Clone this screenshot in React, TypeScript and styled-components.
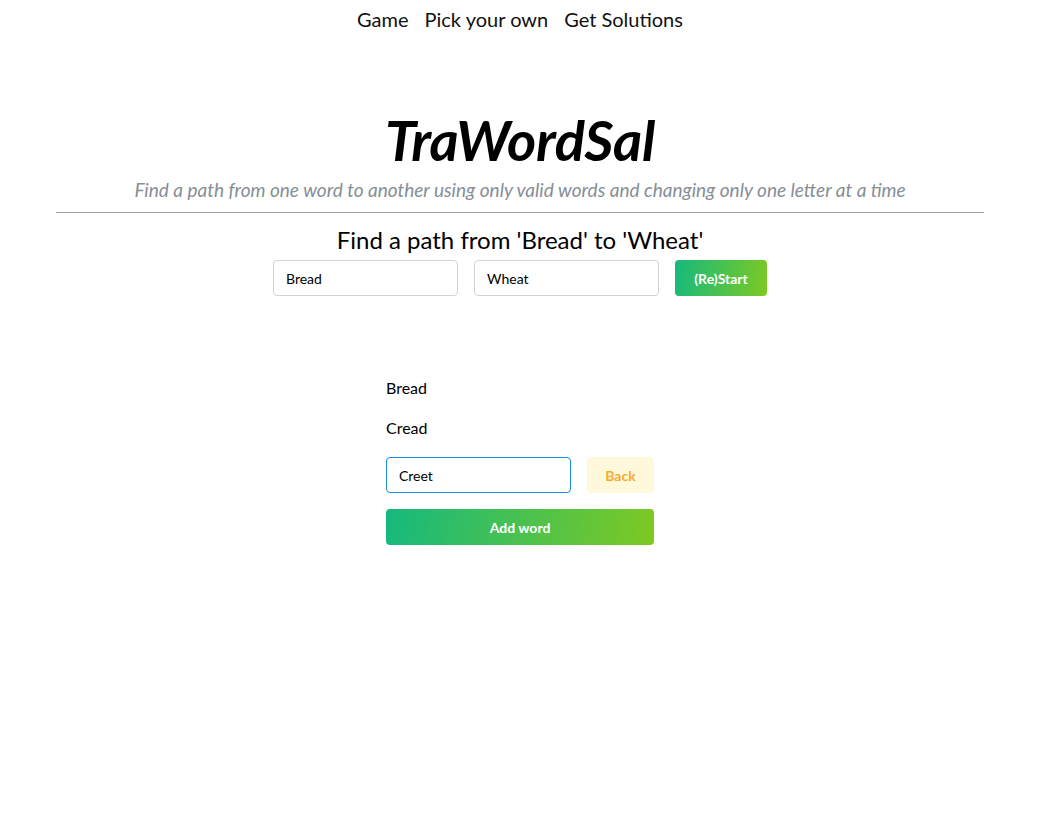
import styled, { createGlobalStyle } from "styled-components";

const GlobalStyle = createGlobalStyle`
  body {
    margin: 7px 13px 8px 8px;
    font-family: Lato, "Noto Sans", sans-serif;
    color: #000;
    background: #fff;
  }
`;

const Nav = styled.nav`
  display: flex;
  justify-content: center;
  gap: 16px;
  font-size: 20px;
  line-height: 24px;
`;

const NavLink = styled.a`
  color: #111;
  text-decoration: none;
  cursor: pointer;
`;

const Header = styled.header`
  margin: 77px 48px 0;
  text-align: center;
  border-bottom: 1px solid #a0a0a0;
  padding-bottom: 10px;
`;

const Title = styled.h1`
  margin: 0;
  font-size: 56px;
  line-height: 64px;
  font-weight: 700;
  font-style: italic;
  letter-spacing: -0.3px;
`;

const Subtitle = styled.p`
  margin: 6px 0 0;
  font-size: 19px;
  line-height: 24px;
  font-style: italic;
  color: #868e96;
`;

const Heading = styled.h2`
  margin: 12px 0 0;
  text-align: center;
  font-size: 24px;
  line-height: 30px;
  font-weight: 400;
`;

const Row = styled.div`
  display: flex;
  justify-content: center;
  gap: 16px;
  margin-top: 5px;
`;

const TextInput = styled.input<{ $focused?: boolean }>`
  box-sizing: border-box;
  width: 185px;
  height: 36px;
  padding: 0 12px;
  font-family: inherit;
  font-size: 14px;
  border: 1px solid ${(p) => (p.$focused ? "#1e88e5" : "#d0d3d8")};
  border-radius: 4px;
  outline: none;
  color: #000;
`;

const GradientButton = styled.button<{ $width: number }>`
  box-sizing: border-box;
  width: ${(p) => p.$width}px;
  height: 36px;
  border: none;
  border-radius: 4px;
  background: linear-gradient(100deg, #15b97e 0%, #7ec922 100%);
  color: #fff;
  font-family: inherit;
  font-weight: 700;
  font-size: 14px;
  cursor: pointer;
`;

const BackButton = styled.button`
  box-sizing: border-box;
  width: 67px;
  height: 36px;
  border: none;
  border-radius: 4px;
  background: #fff8db;
  color: #f5ac32;
  font-family: inherit;
  font-weight: 700;
  font-size: 14px;
  cursor: pointer;
`;

const Game = styled.section`
  width: 268px;
  margin: 80px auto 0;
  display: flex;
  flex-direction: column;
`;

const Word = styled.div`
  font-size: 16px;
  line-height: 24px;
  margin-bottom: 16px;
`;

const InputRow = styled.div`
  display: flex;
  justify-content: space-between;
  margin-top: 1px;
`;

const AddRow = styled.div`
  margin-top: 16px;
`;

export default function App() {
  return (
    <>
      <GlobalStyle />
      <Nav>
        <NavLink>Game</NavLink>
        <NavLink>Pick your own</NavLink>
        <NavLink>Get Solutions</NavLink>
      </Nav>
      <Header>
        <Title>TraWordSal</Title>
        <Subtitle>
          Find a path from one word to another using only valid words and changing only one letter at a time
        </Subtitle>
      </Header>
      <Heading>Find a path from 'Bread' to 'Wheat'</Heading>
      <Row>
        <TextInput defaultValue="Bread" />
        <TextInput defaultValue="Wheat" />
        <GradientButton $width={92}>(Re)Start</GradientButton>
      </Row>
      <Game>
        <Word>Bread</Word>
        <Word>Cread</Word>
        <InputRow>
          <TextInput $focused defaultValue="Creet" />
          <BackButton>Back</BackButton>
        </InputRow>
        <AddRow>
          <GradientButton $width={268}>Add word</GradientButton>
        </AddRow>
      </Game>
    </>
  );
}
